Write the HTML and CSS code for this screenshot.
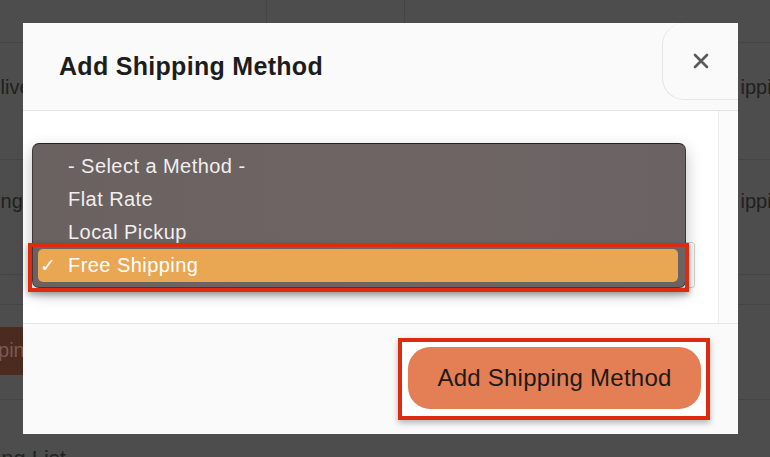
FILE: index.html
```html
<!DOCTYPE html>
<html>
<head>
<meta charset="utf-8">
<link rel="stylesheet" href="styles.css">
</head>
<body>
<div class="page">
  <div class="bg-row bg-head">
    <div class="bg-cell c1"></div>
    <div class="bg-cell c2"></div>
    <div class="bg-cell c3"></div>
  </div>
  <div class="bg-row bg-r1">
    <span class="bg-left t1">Delivery</span>
    <span class="bg-right">Shipping</span>
  </div>
  <div class="bg-row bg-r2">
    <span class="bg-left t2">Shipping</span>
    <span class="bg-right">Shipping</span>
  </div>
  <div class="bg-row bg-r3"></div>
  <div class="bg-row bg-r4">
    <span class="bg-btn">Shipping</span>
  </div>
  <div class="bg-title">Shipping List</div>

  <div class="modal">
    <div class="modal-head">
      <h2 class="modal-title">Add Shipping Method</h2>
      <button class="close" aria-label="Close">
        <svg width="16" height="16" viewBox="0 0 16 16"><path d="M2 2 L14 14 M14 2 L2 14" stroke="#5a5a5a" stroke-width="2.6" stroke-linecap="round"/></svg>
      </button>
    </div>
    <div class="modal-body">
      <div class="body-content">
        <p class="intro">Choose the shipping method you wish to add. Only shipping methods which support zones are listed.</p>
        <div class="select-box"></div>
      </div>
      <div class="scroll-track"></div>
    </div>
    <div class="modal-foot">
      <div class="mark-btn">
        <button class="primary">Add Shipping Method</button>
      </div>
    </div>
  </div>

  <div class="popup">
    <div class="opt">- Select a Method -</div>
    <div class="opt">Flat Rate</div>
    <div class="opt">Local Pickup</div>
    <div class="opt sel"><span class="check">✓</span>Free Shipping</div>
  </div>
  <div class="mark-row"></div>
</div>
</body>
</html>
```

FILE: styles.css
```css
* { box-sizing: border-box; }
html, body { margin: 0; padding: 0; }
body {
  width: 770px;
  height: 457px;
  overflow: hidden;
  background: #4d4d4d;
  font-family: "Liberation Sans", Arial, sans-serif;
}
.page {
  position: relative;
  width: 770px;
  height: 457px;
  overflow: hidden;
}
.bg-row {
  display: flex;
  align-items: flex-start;
  justify-content: space-between;
  border-bottom: 1px solid #454545;
  color: #1f1f1f;
  font-size: 20px;
  line-height: 23px;
}
.bg-head { height: 43px; align-items: stretch; justify-content: flex-start; }
.bg-head .c1 { width: 267px; border-right: 1px solid #444; }
.bg-head .c2 { width: 138px; border-right: 1px solid #444; }
.bg-r1 { height: 117px; padding-top: 33px; }
.bg-r2 { height: 115px; padding-top: 30px; }
.bg-r3 { height: 30px; }
.bg-r4 { height: 95px; border-bottom: 1px solid #454545; padding-top: 22px; }
.t1 { margin-left: -25px; }
.t2 { margin-left: -55px; }
.bg-right { width: 30px; overflow: hidden; white-space: nowrap; text-indent: -24px; }
.bg-btn {
  margin-left: -50px;
  background: #4b2b20;
  color: #7b5a4e;
  padding: 12px 8px;
  font-size: 20px;
  height: 48px;
}
.bg-title {
  margin-left: -60px;
  margin-top: 46px;
  color: #222;
  font-size: 22px;
}

.modal {
  position: absolute;
  left: 23px;
  top: 23px;
  width: 715px;
  height: 411px;
  background: #fff;
  display: flex;
  flex-direction: column;
  overflow: hidden;
}
.modal-head {
  height: 88px;
  background: #fafafa;
  border-bottom: 1px solid #e4e4e4;
  display: flex;
  align-items: center;
  justify-content: space-between;
  padding-left: 36px;
  flex: none;
}
.modal-title {
  margin: 0;
  font-size: 25px;
  font-weight: bold;
  letter-spacing: 0.3px;
  color: #1d1d1d;
}
.close {
  align-self: flex-start;
  width: 76px;
  height: 77px;
  border: 1px solid #e6e6e6;
  border-right: none;
  border-top: none;
  border-radius: 22px 0 0 22px;
  background: #fafafa;
  display: flex;
  align-items: center;
  justify-content: center;
  padding: 0;
}
.modal-body {
  flex: 1;
  display: flex;
  min-height: 0;
}
.body-content {
  flex: 1;
  padding: 27px 23px 0 25px;
}
.intro {
  margin: 0;
  font-size: 17px;
  line-height: 24px;
  color: #333;
}
.select-box {
  margin-top: 56px;
  height: 46px;
  border: 1px solid #cfcfcf;
  border-radius: 3px;
  background: #fff;
}
.scroll-track {
  width: 20px;
  border-left: 1px solid #ececec;
  background: #fbfbfb;
}
.modal-foot {
  height: 111px;
  flex: none;
  background: #fafafa;
  border-top: 1px solid #e6e6e6;
  display: flex;
  align-items: center;
  justify-content: flex-end;
  padding-right: 28px;
}
.mark-btn {
  border: 4px solid #dc2b0e;
  padding: 5px 5px 7px 6px;
  background: #fff;
  box-shadow: 0 3px 6px rgba(0,0,0,0.28);
}
.primary {
  display: block;
  width: 293px;
  height: 62px;
  border: none;
  border-radius: 22px;
  background: #e37e55;
  color: #1e1a18;
  font-family: "Liberation Sans", Arial, sans-serif;
  font-size: 24px;
  letter-spacing: 0.25px;
  padding: 0;
}

.popup {
  position: absolute;
  left: 32px;
  top: 143px;
  width: 654px;
  height: 145px;
  background: linear-gradient(90deg, #6a6161 0%, #6e6464 50%, #6b6363 100%);
  border: 1px solid #3e3838;
  border-top-color: #222;
  border-radius: 7px;
  padding: 6px 7px 5px 5px;
  box-shadow: 0 6px 16px rgba(0,0,0,0.25);
}
.opt {
  height: 33px;
  line-height: 33px;
  font-size: 20px;
  letter-spacing: 0.45px;
  color: #f2eeee;
  padding-left: 30px;
  position: relative;
}
.opt.sel {
  height: 33px;
  background: #e9a653;
  border-radius: 5px;
  color: #fff;
}
.check {
  position: absolute;
  left: 2px;
  top: 0;
  font-size: 19px;
  font-family: "DejaVu Sans", sans-serif;
}
.mark-row {
  position: absolute;
  left: 28px;
  top: 243px;
  width: 661px;
  height: 49px;
  border: 4px solid #dc2b0e;
  box-shadow: 0 3px 6px rgba(0,0,0,0.3);
}
```
